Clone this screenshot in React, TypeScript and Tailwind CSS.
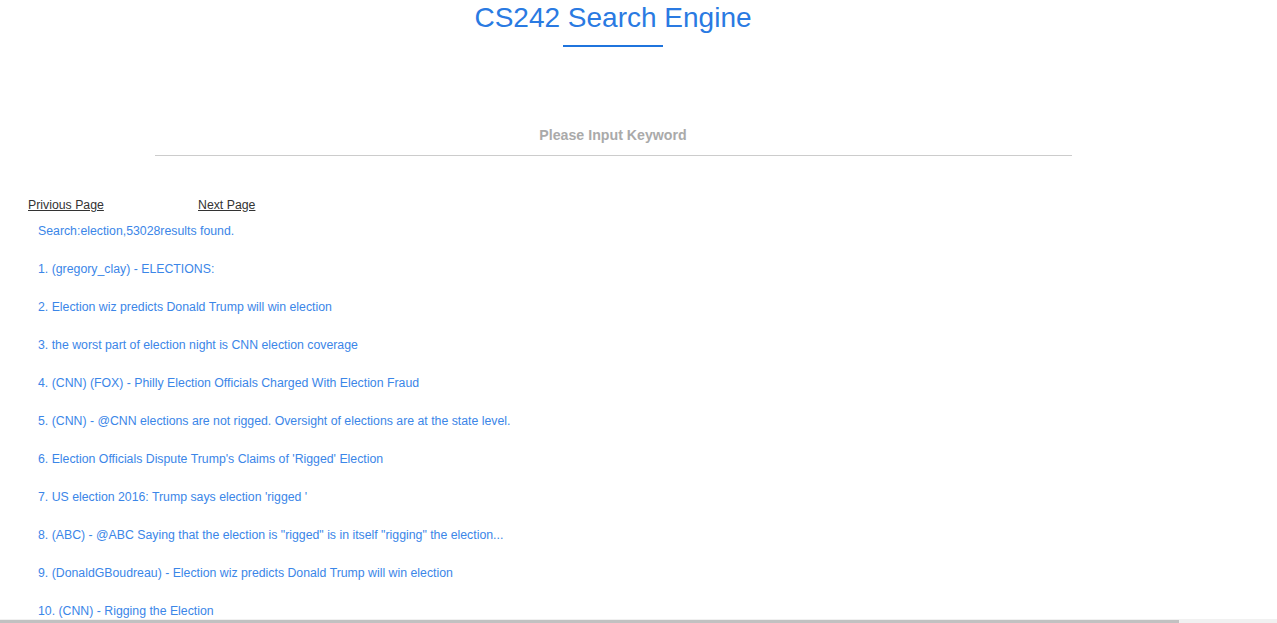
const results = [
  '1. (gregory_clay) - ELECTIONS:',
  '2. Election wiz predicts Donald Trump will win election',
  '3. the worst part of election night is CNN election coverage',
  '4. (CNN) (FOX) - Philly Election Officials Charged With Election Fraud',
  '5. (CNN) - @CNN elections are not rigged. Oversight of elections are at the state level.',
  "6. Election Officials Dispute Trump's Claims of 'Rigged' Election",
  "7. US election 2016: Trump says election 'rigged '",
  '8. (ABC) - @ABC Saying that the election is "rigged" is in itself "rigging" the election...',
  '9. (DonaldGBoudreau) - Election wiz predicts Donald Trump will win election',
  '10. (CNN) - Rigging the Election',
]

export default function App() {
  return (
    <div className="h-[623px] overflow-hidden bg-white font-['Liberation_Sans',Arial,sans-serif]">
      <div className="w-[1226px]">
        <div className="flex flex-col items-center pt-[1px]">
          <h1 className="text-[28px] leading-[34px] text-[#2a7ae2]">CS242 Search Engine</h1>
          <div className="mt-[10px] h-[2px] w-[100px] bg-[#1f74dd]" />
        </div>

        <div className="mx-auto mt-[76px] w-[917px] border-b border-[#cccccc] pb-[8px] text-center">
          <input
            className="w-full bg-transparent text-center text-[14.2px] font-bold text-[#aaaaaa] outline-none placeholder:text-[#aaaaaa]"
            placeholder="Please Input Keyword"
          />
        </div>
      </div>

      <div className="mt-[42px] flex pl-[28px] text-[12.3px] leading-[14px] text-[#333333]">
        <a href="#" className="w-[170px] underline">Privious Page</a>
        <a href="#" className="underline">Next Page</a>
      </div>

      <div className="mt-[12px] flex flex-col gap-[24px] pl-[38px] text-[12.3px] leading-[14px] text-[#3b86e8]">
        <p>Search:election,53028results found.</p>
        {results.map((r) => (
          <p key={r}>{r}</p>
        ))}
      </div>

      <div className="fixed bottom-0 left-0 h-[4px] w-full bg-[#f1f1f1]">
        <div className="mt-[1px] h-[3px] w-[1179px] bg-[#c1c1c1]" />
      </div>
    </div>
  )
}
